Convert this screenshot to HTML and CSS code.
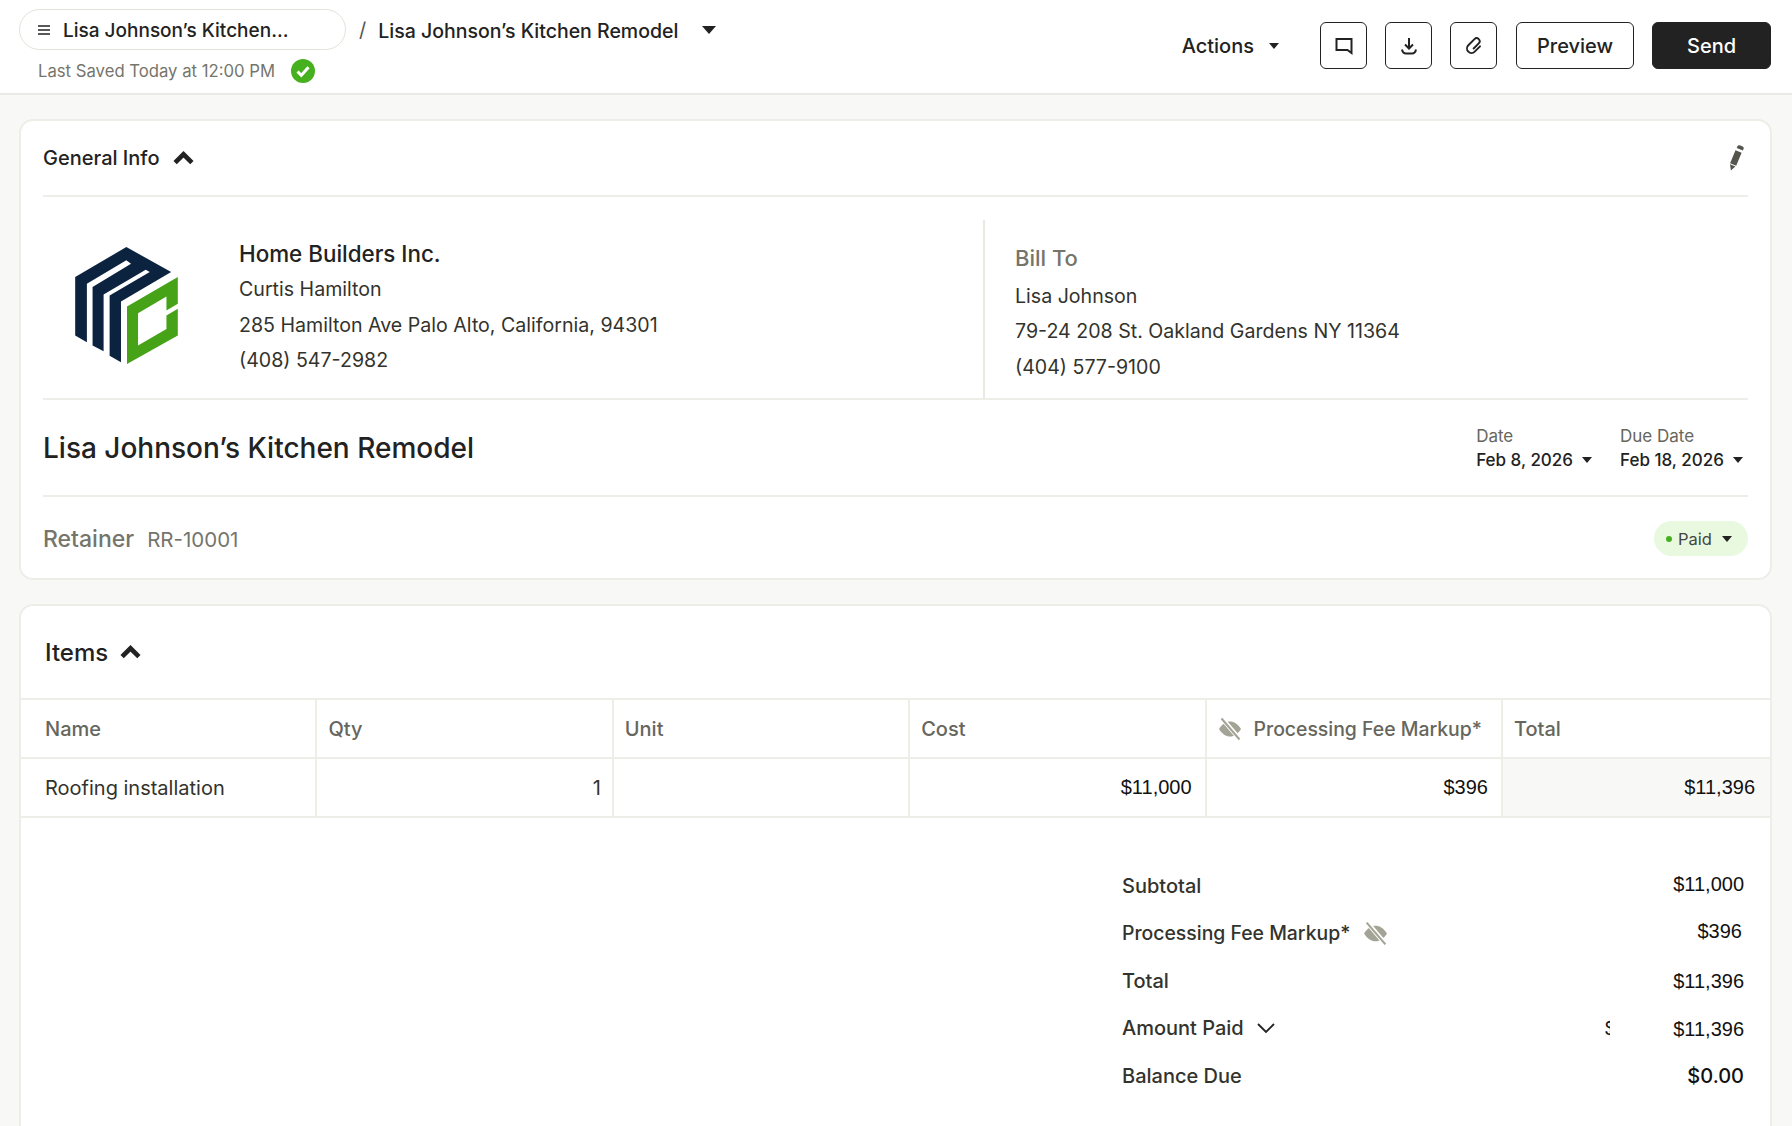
FILE: index.html
```html
<!DOCTYPE html>
<html lang="en">
<head>
<meta charset="utf-8">
<title>Lisa Johnson’s Kitchen Remodel</title>
<link rel="stylesheet" href="styles.css">
</head>
<body>
<header class="topbar">
  <div class="crumbs">
    <div class="crumb-row">
      <div class="pill">
        <svg class="ham" viewBox="0 0 12 10"><path d="M0 1h12M0 5h12M0 9h12" stroke="#222" stroke-width="1.4"/></svg>
        <span class="pill-text">Lisa Johnson’s Kitchen...</span>
      </div>
      <span class="slash">/</span>
      <span class="crumb-title">Lisa Johnson’s Kitchen Remodel</span>
      <svg class="caret caret-lg" viewBox="0 0 14 8"><path d="M0 0h14L7 8z"/></svg>
    </div>
    <div class="saved">
      <span>Last Saved Today at 12:00 PM</span>
      <svg class="check" viewBox="0 0 24 24"><circle cx="12" cy="12" r="12" fill="#46b01e"/><path d="M6.5 12.5l3.8 3.8 7.2-8" fill="none" stroke="#fff" stroke-width="3"/></svg>
    </div>
  </div>
  <div class="actions">
    <div class="actions-menu"><span>Actions</span><svg class="caret" viewBox="0 0 10 6"><path d="M0 0h10L5 6z"/></svg></div>
    <button class="btn btn-icon" aria-label="Comment">
      <svg viewBox="0 0 20 20"><path d="M2.5 3h15v14l-4-3h-11z" fill="none" stroke="#222" stroke-width="2"/></svg>
    </button>
    <button class="btn btn-icon" aria-label="Download">
      <svg viewBox="0 0 20 20"><path d="M10 2v10M6 8.500l4 4 4-4" fill="none" stroke="#222" stroke-width="2"/><path d="M3 13.500c.5 2.500 2 4 4 4h6c2 0 3.500-1.500 4-4" fill="none" stroke="#222" stroke-width="2"/></svg>
    </button>
    <button class="btn btn-icon btn-clip" aria-label="Attach">
      <svg viewBox="0 0 20 20"><path d="M14.500 6v7.500a4.500 4.500 0 0 1-9 0V4.800a3 3 0 0 1 6 0V12" fill="none" stroke="#222" stroke-width="1.900" stroke-linecap="round" transform="rotate(45 10 10)"/></svg>
    </button>
    <button class="btn btn-text">Preview</button>
    <button class="btn btn-send">Send</button>
  </div>
</header>

<main class="page">
  <section class="card card-info">
    <div class="info-head">
      <div class="section-toggle">
        <span class="info-title">General Info</span>
        <svg class="chev" viewBox="0 0 20 13"><path d="M2 11l8-8 8 8" fill="none" stroke="#222" stroke-width="4.400"/></svg>
      </div>
      <svg class="pencil" viewBox="0 0 16 26"><path d="M9.400 1.200c.4-.9 1.400-1.300 2.300-.9l3 1.200c.9.4 1.300 1.400.9 2.300l-.7 1.800-6.200-2.500zM7.500 5.200l6.100 2.500-5.400 13.100-6.100-2.500zM2 19.300l5.400 2.200-4.500 4z" fill="#55554d"/></svg>
    </div>
    <div class="parties">
      <div class="from">
        <svg class="logo" viewBox="105 80 307 350">
          <path fill="#0c2340" d="M105 170L258 80l134 75-150 88v182l-34-20V225l120-70-12-7-126 74v170l-33-17V200l115-70-14-10-118 70v175l-35-20z"/>
          <path fill="#46a318" d="M260 258l152-88v80l-34 20v-42l-85 50v97l85-50v-40l34-20v80l-152 85z"/>
        </svg>
        <div class="from-text">
          <div class="company">Home Builders Inc.</div>
          <div class="line">Curtis Hamilton</div>
          <div class="line">285 Hamilton Ave Palo Alto, California, 94301</div>
          <div class="line">(408) 547-2982</div>
        </div>
      </div>
      <div class="bill">
        <div class="bill-label">Bill To</div>
        <div class="line">Lisa Johnson</div>
        <div class="line">79-24 208 St. Oakland Gardens NY 11364</div>
        <div class="line">(404) 577-9100</div>
      </div>
    </div>
    <div class="title-row">
      <h1 class="doc-title">Lisa Johnson’s Kitchen Remodel</h1>
      <div class="dates">
        <div class="date">
          <div class="date-label">Date</div>
          <div class="date-value"><span>Feb 8, 2026</span><svg class="caret" viewBox="0 0 10 6"><path d="M0 0h10L5 6z"/></svg></div>
        </div>
        <div class="date">
          <div class="date-label">Due Date</div>
          <div class="date-value"><span>Feb 18, 2026</span><svg class="caret" viewBox="0 0 10 6"><path d="M0 0h10L5 6z"/></svg></div>
        </div>
      </div>
    </div>
    <div class="retainer-row">
      <div class="retainer"><span class="ret-label">Retainer</span><span class="ret-num">RR-10001</span></div>
      <div class="status"><i class="dot"></i><span>Paid</span><svg class="caret" viewBox="0 0 10 6"><path d="M0 0h10L5 6z"/></svg></div>
    </div>
  </section>

  <section class="card card-items">
    <div class="items-head">
      <h2 class="items-title">Items</h2>
      <svg class="chev chev-items" viewBox="0 0 20 13"><path d="M2 11l8-8 8 8" fill="none" stroke="#222" stroke-width="4.400"/></svg>
    </div>
    <div class="table">
      <div class="th th-name">Name</div>
      <div class="th">Qty</div>
      <div class="th">Unit</div>
      <div class="th">Cost</div>
      <div class="th th-fee">
        <svg class="eye" viewBox="0 0 24 24"><path d="M1 12C4 7 8 4.500 12 4.500S20 7 23 12c-3 5-7 7.500-11 7.500S4 17 1 12z" fill="#a3a396"/><path d="M4 1.500l18 21" stroke="#fff" stroke-width="4.500"/><path d="M3.500 1.500l18 21" stroke="#a3a396" stroke-width="2"/></svg>
        <span>Processing Fee Markup*</span>
      </div>
      <div class="th th-last">Total</div>
      <div class="td td-name">Roofing installation</div>
      <div class="td td-qty">1</div>
      <div class="td"></div>
      <div class="td td-num td-cost">$11,000</div>
      <div class="td td-num td-fee">$396</div>
      <div class="td td-num td-total">$11,396</div>
    </div>
    <div class="summary">
      <div class="sum-row"><div class="sum-label">Subtotal</div><div class="sum-value sum-up">$11,000</div></div>
      <div class="sum-row"><div class="sum-label"><span class="fee-text">Processing Fee Markup*</span><svg class="eye eye-sum" viewBox="0 0 24 24"><path d="M1 12C4 7 8 4.500 12 4.500S20 7 23 12c-3 5-7 7.500-11 7.500S4 17 1 12z" fill="#a3a396"/><path d="M4 1.500l18 21" stroke="#fff" stroke-width="4.500"/><path d="M3.500 1.500l18 21" stroke="#a3a396" stroke-width="2"/></svg></div><div class="sum-value sum-fee">$396</div></div>
      <div class="sum-row"><div class="sum-label">Total</div><div class="sum-value sum-down">$11,396</div></div>
      <div class="sum-row"><div class="sum-label"><span>Amount Paid</span><svg class="chev-down" viewBox="0 0 18 11"><path d="M1 1l8 8 8-8" fill="none" stroke="#222" stroke-width="1.800"/></svg></div><div class="clip">$</div><div class="sum-value sum-down">$11,396</div></div>
      <div class="sum-row"><div class="sum-label">Balance Due</div><div class="sum-value sum-bal">$0.00</div></div>
    </div>
  </section>
</main>
</body>
</html>
```

FILE: styles.css
```css
* { box-sizing: border-box; }
html, body { margin: 0; height: 100%; }
body {
  height: 100vh;
  overflow: hidden;
  background: #f8f8f6;
  color: #222;
  font-family: Inter, "Noto Sans", sans-serif;
  font-size: 20px;
}
.topbar {
  height: 95px;
  background: #fff;
  border-bottom: 2px solid #ebebe6;
  display: flex;
  justify-content: space-between;
  padding: 9px 21px 0 19px;
}
.crumb-row { display: flex; align-items: center; height: 41px; }
.pill {
  width: 327px;
  height: 41px;
  border: 1.500px solid #e3e3da;
  border-radius: 21px;
  display: flex;
  align-items: center;
  padding-left: 18px;
  gap: 13px;
  font-weight: 500;
  font-size: 19px;
}
.pill-text { margin-top: 2px; }
.ham { width: 12px; height: 10px; }
.slash { margin-left: 13px; color: #55554d; font-weight: 400; }
.crumb-title { margin: 2px 0 0 12px; font-weight: 500; font-size: 19.500px; }
.caret { width: 10px; height: 6px; fill: #222; flex: none; }
.caret-lg { width: 14px; height: 8px; margin-left: 24px; }
.saved {
  display: flex;
  align-items: center;
  gap: 16px;
  margin: 9px 0 0 19px;
  font-size: 16.700px;
  color: #75756b;
}
.check { width: 24px; height: 24px; }
.actions { display: flex; align-items: center; height: 47px; margin-top: 13px; }
.actions-menu { display: flex; align-items: center; gap: 15px; margin-right: 41px; font-weight: 500; font-size: 20px; }
.btn {
  height: 47px;
  border: 1.500px solid #222;
  border-radius: 6px;
  background: #fff;
  color: #222;
  font: 500 20px Inter, "Noto Sans", sans-serif;
  padding: 0;
}
.btn-icon { width: 47px; margin-right: 18px; display: flex; align-items: center; justify-content: center; }
.btn-icon svg { width: 20px; height: 20px; }
.btn-clip { margin-right: 19px; }
.btn-text { width: 118px; margin-right: 18px; }
.btn-send { width: 119px; background: #222; color: #fff; }

.page { padding: 24px 20px 0 19px; }
.card {
  background: #fff;
  border: 2px solid #eeeee9;
  border-radius: 14px;
}
.card-info { height: 461px; padding: 0 22px; }
.info-head {
  height: 77px;
  display: flex;
  align-items: center;
  justify-content: space-between;
  border-bottom: 2px solid #eeeee9;
  margin-top: -1px;
}
.section-toggle { display: flex; align-items: center; gap: 14px; }
.info-title { font-size: 20px; font-weight: 500; }
.chev { width: 21px; height: 14px; }
.pencil { width: 16px; height: 26px; margin-right: 4px; }

.parties { display: flex; height: 203px; border-bottom: 2px solid #eeeee9; }
.from { width: 940px; display: flex; padding-left: 32px; padding-top: 50px; }
.logo { width: 103px; height: 117px; flex: none; }
.from-text { margin-left: 61px; margin-top: -11px; }
.company { font-size: 22.400px; font-weight: 500; line-height: 36px; }
.line { line-height: 35.500px; font-size: 19.600px; color: #33332d; }
.bill { flex: 1; margin-top: 23px; border-left: 2px solid #e9e9e3; padding: 16.500px 0 0 30px; }
.bill-label { font-size: 22px; font-weight: 500; line-height: 42px; color: #75756b; }

.title-row {
  height: 97px;
  display: flex;
  align-items: center;
  justify-content: space-between;
  border-bottom: 2px solid #eeeee9;
}
.doc-title { margin: 0; font-size: 28px; font-weight: 500; }
.dates { display: flex; gap: 28px; margin: 1px 5px 0 0; }
.date-label { font-size: 17px; color: #66665d; line-height: 22px; }
.date-value { display: flex; align-items: center; gap: 9px; font-size: 17px; font-weight: 500; line-height: 24px; margin-top: 1px; }
.retainer-row { height: 83px; display: flex; align-items: center; justify-content: space-between; }
.retainer { display: flex; align-items: baseline; gap: 13px; }
.ret-label { font-size: 23px; font-weight: 500; color: #75756b; }
.ret-num { font-size: 20.500px; color: #75756b; }
.status {
  height: 35px;
  width: 94px;
  border-radius: 18px;
  background: #e9f9df;
  display: flex;
  align-items: center;
  padding-left: 12px;
  font-size: 16.500px;
  color: #444;
}
.dot { width: 6px; height: 6px; border-radius: 50%; background: #46b01e; margin-right: 6px; }
.status .caret { margin-left: 10px; }

.card-items { margin-top: 24px; height: 700px; }
.items-head { height: 92px; display: flex; align-items: center; padding-left: 24px; gap: 12px; }
.items-title { margin: 0; font-size: 24px; font-weight: 500; }
.chev-items { width: 21px; height: 14px; }
.table {
  display: grid;
  grid-template-columns: repeat(5, 296.400px) 1fr;
  grid-template-rows: 59px 59px;
  border-top: 2px solid #eeeee9;
}
.th, .td {
  display: flex;
  align-items: center;
  padding: 0 11px;
  border-right: 2px solid #eeeee9;
  border-bottom: 2px solid #eeeee9;
}
.th { color: #66665d; font-size: 20px; font-weight: 500; }
.th-name, .td-name { padding-left: 24px; }
.td { font-size: 20px; color: #33332d; }
.th-fee { gap: 12px; font-size: 19.400px; }
.th-last, .td-total { border-right: 0; }
.td-qty { justify-content: flex-end; }
.td-num { justify-content: flex-end; font-family: "Liberation Sans", sans-serif; color: #111; }
.td-cost { padding-right: 13px; }
.td-fee { padding-right: 13px; }
.td-total { background: #f8f8f6; padding-right: 15px; }
.eye { width: 24px; height: 24px; flex: none; }
.eye-sum { width: 25px; height: 25px; }

.summary { margin: 44px 0 0 1101px; width: 622px; }
.sum-row { display: flex; align-items: center; height: 47.500px; position: relative; }
.sum-label { display: flex; align-items: center; gap: 13px; font-size: 20px; font-weight: 500; color: #33332d; }
.fee-text { font-size: 19.400px; }
.sum-value { margin-left: auto; font-family: "Liberation Sans", sans-serif; font-size: 20px; color: #111; }
.sum-up { margin-bottom: 2px; }
.sum-down { margin-top: 2px; }
.sum-fee { margin: 0 2px 4px auto; }
.sum-bal { font-family: Inter, sans-serif; font-weight: 500; }
.chev-down { width: 18px; height: 11px; }
.clip {
  position: absolute;
  left: 483px;
  width: 5px;
  overflow: hidden;
  font-family: "Liberation Sans", sans-serif;
  font-size: 20px;
  color: #111;
}
```
